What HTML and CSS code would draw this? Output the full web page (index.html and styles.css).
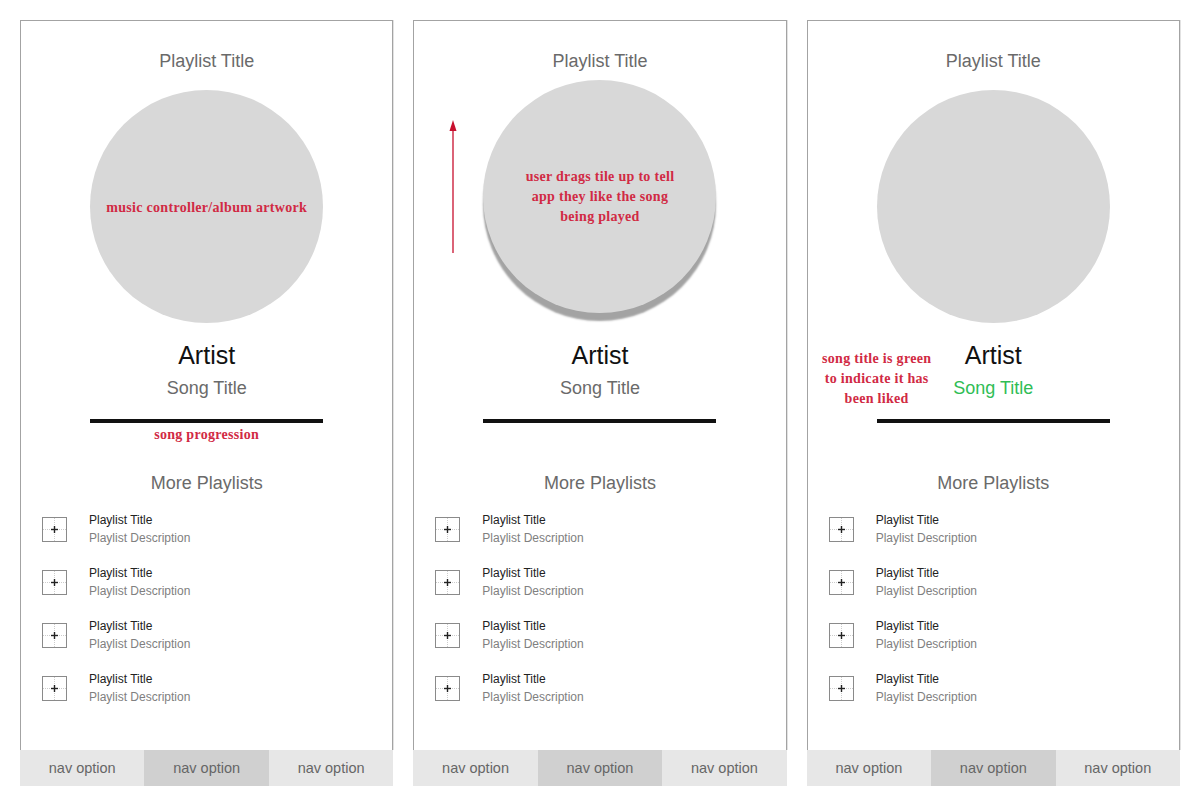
FILE: index.html
```html
<!DOCTYPE html>
<html>
<head>
<meta charset="utf-8">
<link rel="stylesheet" href="styles.css">
</head>
<body>
<div class="board">
  <section class="phone">
    <div class="screen">
      <div class="ptitle">Playlist Title</div>
      <div class="art"><span class="note">music controller/album artwork</span></div>
      <div class="artist">Artist</div>
      <div class="song">Song Title</div>
      <div class="bar"></div>
      <div class="annrow note">song progression</div>
      <div class="more">More Playlists</div>
      <ul class="list">
        <li class="item"><span class="add"><svg width="25" height="25" viewBox="0 0 25 25"><rect x="0.5" y="0.5" width="24" height="24" fill="#fff" stroke="#8a8a8a"/><line x1="1" y1="12.5" x2="24" y2="12.5" stroke="#ccc" stroke-dasharray="1 1"/><line x1="12.5" y1="1" x2="12.5" y2="24" stroke="#ccc" stroke-dasharray="1 1"/><line x1="9" y1="12.5" x2="16" y2="12.5" stroke="#222" stroke-width="1.4"/><line x1="12.5" y1="9" x2="12.5" y2="16" stroke="#222" stroke-width="1.4"/></svg></span><span class="txt"><span class="it">Playlist Title</span><span class="id">Playlist Description</span></span></li>
        <li class="item"><span class="add"><svg width="25" height="25" viewBox="0 0 25 25"><rect x="0.5" y="0.5" width="24" height="24" fill="#fff" stroke="#8a8a8a"/><line x1="1" y1="12.5" x2="24" y2="12.5" stroke="#ccc" stroke-dasharray="1 1"/><line x1="12.5" y1="1" x2="12.5" y2="24" stroke="#ccc" stroke-dasharray="1 1"/><line x1="9" y1="12.5" x2="16" y2="12.5" stroke="#222" stroke-width="1.4"/><line x1="12.5" y1="9" x2="12.5" y2="16" stroke="#222" stroke-width="1.4"/></svg></span><span class="txt"><span class="it">Playlist Title</span><span class="id">Playlist Description</span></span></li>
        <li class="item"><span class="add"><svg width="25" height="25" viewBox="0 0 25 25"><rect x="0.5" y="0.5" width="24" height="24" fill="#fff" stroke="#8a8a8a"/><line x1="1" y1="12.5" x2="24" y2="12.5" stroke="#ccc" stroke-dasharray="1 1"/><line x1="12.5" y1="1" x2="12.5" y2="24" stroke="#ccc" stroke-dasharray="1 1"/><line x1="9" y1="12.5" x2="16" y2="12.5" stroke="#222" stroke-width="1.4"/><line x1="12.5" y1="9" x2="12.5" y2="16" stroke="#222" stroke-width="1.4"/></svg></span><span class="txt"><span class="it">Playlist Title</span><span class="id">Playlist Description</span></span></li>
        <li class="item"><span class="add"><svg width="25" height="25" viewBox="0 0 25 25"><rect x="0.5" y="0.5" width="24" height="24" fill="#fff" stroke="#8a8a8a"/><line x1="1" y1="12.5" x2="24" y2="12.5" stroke="#ccc" stroke-dasharray="1 1"/><line x1="12.5" y1="1" x2="12.5" y2="24" stroke="#ccc" stroke-dasharray="1 1"/><line x1="9" y1="12.5" x2="16" y2="12.5" stroke="#222" stroke-width="1.4"/><line x1="12.5" y1="9" x2="12.5" y2="16" stroke="#222" stroke-width="1.4"/></svg></span><span class="txt"><span class="it">Playlist Title</span><span class="id">Playlist Description</span></span></li>
      </ul>
    </div>
    <nav class="nav"><span class="opt">nav option</span><span class="opt active">nav option</span><span class="opt">nav option</span></nav>
  </section>

  <section class="phone">
    <div class="screen">
      <svg class="arrow" width="14" height="134" viewBox="0 0 14 134"><line x1="7" y1="8" x2="7" y2="133" stroke="#c8102e" stroke-width="1.3"/><polygon points="7,0 3.5,11 10.5,11" fill="#c8102e"/></svg>
      <div class="ptitle">Playlist Title</div>
      <div class="art lifted"><span class="note">user drags tile up to tell<br>app they like the song<br>being played</span></div>
      <div class="artist">Artist</div>
      <div class="song">Song Title</div>
      <div class="bar"></div>
      <div class="annrow"></div>
      <div class="more">More Playlists</div>
      <ul class="list">
        <li class="item"><span class="add"><svg width="25" height="25" viewBox="0 0 25 25"><rect x="0.5" y="0.5" width="24" height="24" fill="#fff" stroke="#8a8a8a"/><line x1="1" y1="12.5" x2="24" y2="12.5" stroke="#ccc" stroke-dasharray="1 1"/><line x1="12.5" y1="1" x2="12.5" y2="24" stroke="#ccc" stroke-dasharray="1 1"/><line x1="9" y1="12.5" x2="16" y2="12.5" stroke="#222" stroke-width="1.4"/><line x1="12.5" y1="9" x2="12.5" y2="16" stroke="#222" stroke-width="1.4"/></svg></span><span class="txt"><span class="it">Playlist Title</span><span class="id">Playlist Description</span></span></li>
        <li class="item"><span class="add"><svg width="25" height="25" viewBox="0 0 25 25"><rect x="0.5" y="0.5" width="24" height="24" fill="#fff" stroke="#8a8a8a"/><line x1="1" y1="12.5" x2="24" y2="12.5" stroke="#ccc" stroke-dasharray="1 1"/><line x1="12.5" y1="1" x2="12.5" y2="24" stroke="#ccc" stroke-dasharray="1 1"/><line x1="9" y1="12.5" x2="16" y2="12.5" stroke="#222" stroke-width="1.4"/><line x1="12.5" y1="9" x2="12.5" y2="16" stroke="#222" stroke-width="1.4"/></svg></span><span class="txt"><span class="it">Playlist Title</span><span class="id">Playlist Description</span></span></li>
        <li class="item"><span class="add"><svg width="25" height="25" viewBox="0 0 25 25"><rect x="0.5" y="0.5" width="24" height="24" fill="#fff" stroke="#8a8a8a"/><line x1="1" y1="12.5" x2="24" y2="12.5" stroke="#ccc" stroke-dasharray="1 1"/><line x1="12.5" y1="1" x2="12.5" y2="24" stroke="#ccc" stroke-dasharray="1 1"/><line x1="9" y1="12.5" x2="16" y2="12.5" stroke="#222" stroke-width="1.4"/><line x1="12.5" y1="9" x2="12.5" y2="16" stroke="#222" stroke-width="1.4"/></svg></span><span class="txt"><span class="it">Playlist Title</span><span class="id">Playlist Description</span></span></li>
        <li class="item"><span class="add"><svg width="25" height="25" viewBox="0 0 25 25"><rect x="0.5" y="0.5" width="24" height="24" fill="#fff" stroke="#8a8a8a"/><line x1="1" y1="12.5" x2="24" y2="12.5" stroke="#ccc" stroke-dasharray="1 1"/><line x1="12.5" y1="1" x2="12.5" y2="24" stroke="#ccc" stroke-dasharray="1 1"/><line x1="9" y1="12.5" x2="16" y2="12.5" stroke="#222" stroke-width="1.4"/><line x1="12.5" y1="9" x2="12.5" y2="16" stroke="#222" stroke-width="1.4"/></svg></span><span class="txt"><span class="it">Playlist Title</span><span class="id">Playlist Description</span></span></li>
      </ul>
    </div>
    <nav class="nav"><span class="opt">nav option</span><span class="opt active">nav option</span><span class="opt">nav option</span></nav>
  </section>

  <section class="phone">
    <div class="screen">
      <div class="side-note note">song title is green<br>to indicate it has<br>been liked</div>
      <div class="ptitle">Playlist Title</div>
      <div class="art"></div>
      <div class="artist">Artist</div>
      <div class="song liked">Song Title</div>
      <div class="bar"></div>
      <div class="annrow"></div>
      <div class="more">More Playlists</div>
      <ul class="list">
        <li class="item"><span class="add"><svg width="25" height="25" viewBox="0 0 25 25"><rect x="0.5" y="0.5" width="24" height="24" fill="#fff" stroke="#8a8a8a"/><line x1="1" y1="12.5" x2="24" y2="12.5" stroke="#ccc" stroke-dasharray="1 1"/><line x1="12.5" y1="1" x2="12.5" y2="24" stroke="#ccc" stroke-dasharray="1 1"/><line x1="9" y1="12.5" x2="16" y2="12.5" stroke="#222" stroke-width="1.4"/><line x1="12.5" y1="9" x2="12.5" y2="16" stroke="#222" stroke-width="1.4"/></svg></span><span class="txt"><span class="it">Playlist Title</span><span class="id">Playlist Description</span></span></li>
        <li class="item"><span class="add"><svg width="25" height="25" viewBox="0 0 25 25"><rect x="0.5" y="0.5" width="24" height="24" fill="#fff" stroke="#8a8a8a"/><line x1="1" y1="12.5" x2="24" y2="12.5" stroke="#ccc" stroke-dasharray="1 1"/><line x1="12.5" y1="1" x2="12.5" y2="24" stroke="#ccc" stroke-dasharray="1 1"/><line x1="9" y1="12.5" x2="16" y2="12.5" stroke="#222" stroke-width="1.4"/><line x1="12.5" y1="9" x2="12.5" y2="16" stroke="#222" stroke-width="1.4"/></svg></span><span class="txt"><span class="it">Playlist Title</span><span class="id">Playlist Description</span></span></li>
        <li class="item"><span class="add"><svg width="25" height="25" viewBox="0 0 25 25"><rect x="0.5" y="0.5" width="24" height="24" fill="#fff" stroke="#8a8a8a"/><line x1="1" y1="12.5" x2="24" y2="12.5" stroke="#ccc" stroke-dasharray="1 1"/><line x1="12.5" y1="1" x2="12.5" y2="24" stroke="#ccc" stroke-dasharray="1 1"/><line x1="9" y1="12.5" x2="16" y2="12.5" stroke="#222" stroke-width="1.4"/><line x1="12.5" y1="9" x2="12.5" y2="16" stroke="#222" stroke-width="1.4"/></svg></span><span class="txt"><span class="it">Playlist Title</span><span class="id">Playlist Description</span></span></li>
        <li class="item"><span class="add"><svg width="25" height="25" viewBox="0 0 25 25"><rect x="0.5" y="0.5" width="24" height="24" fill="#fff" stroke="#8a8a8a"/><line x1="1" y1="12.5" x2="24" y2="12.5" stroke="#ccc" stroke-dasharray="1 1"/><line x1="12.5" y1="1" x2="12.5" y2="24" stroke="#ccc" stroke-dasharray="1 1"/><line x1="9" y1="12.5" x2="16" y2="12.5" stroke="#222" stroke-width="1.4"/><line x1="12.5" y1="9" x2="12.5" y2="16" stroke="#222" stroke-width="1.4"/></svg></span><span class="txt"><span class="it">Playlist Title</span><span class="id">Playlist Description</span></span></li>
      </ul>
    </div>
    <nav class="nav"><span class="opt">nav option</span><span class="opt active">nav option</span><span class="opt">nav option</span></nav>
  </section>
</div>
</body>
</html>
```

FILE: styles.css
```css
html, body {
  margin: 0;
  padding: 0;
  background: #fff;
}
body {
  font-family: "Liberation Sans", Arial, sans-serif;
  color: #666;
}
.board {
  display: flex;
  gap: 20px;
  padding: 20px;
  height: 766px;
}
.phone {
  flex: 1;
  display: flex;
  flex-direction: column;
  min-width: 0;
}
.screen {
  flex: 1;
  position: relative;
  display: flex;
  flex-direction: column;
  align-items: center;
  padding-top: 28px;
  border: 1px solid #a3a3a3;
  border-bottom: none;
  box-shadow: 1px 0 0 #e2e2e2;
}
.ptitle {
  font-size: 18px;
  line-height: 24px;
  color: #6a6a6a;
}
.art {
  margin-top: 17px;
  width: 233px;
  height: 233px;
  border-radius: 50%;
  background: #d8d8d8;
  display: flex;
  align-items: center;
  justify-content: center;
  text-align: center;
  flex-shrink: 0;
}
.art .note {
  padding-top: 3px;
}
.art.lifted {
  transform: translateY(-10px);
  box-shadow: 0 8px 2px #a3a3a3;
}
.art.lifted .note {
  padding-top: 0;
}
.note {
  font-family: "Liberation Serif", "Times New Roman", serif;
  font-weight: bold;
  font-size: 14px;
  letter-spacing: 0.3px;
  line-height: 20px;
  color: #d12a44;
}
.artist {
  margin-top: 17px;
  font-size: 25px;
  line-height: 30px;
  color: #111;
}
.song {
  margin-top: 6px;
  font-size: 18px;
  line-height: 24px;
  color: #6a6a6a;
}
.song.liked {
  color: #2fbd55;
}
.bar {
  margin-top: 19px;
  width: 233px;
  height: 4px;
  background: #111;
}
.annrow {
  margin-top: 4px;
  height: 16px;
  line-height: 16px;
}
.more {
  margin-top: 28px;
  font-size: 18px;
  line-height: 24px;
  color: #6a6a6a;
}
.list {
  list-style: none;
  margin: 16px 0 0;
  padding: 0 0 0 21px;
  align-self: stretch;
  display: flex;
  flex-direction: column;
  gap: 17px;
}
.item {
  display: flex;
  align-items: center;
  gap: 22px;
  height: 36px;
}
.add {
  display: flex;
  width: 25px;
  height: 25px;
  margin-top: 1px;
}
.txt {
  display: flex;
  flex-direction: column;
}
.it {
  font-size: 12px;
  line-height: 18px;
  color: #222;
}
.id {
  font-size: 12px;
  line-height: 18px;
  color: #808080;
}
.nav {
  display: flex;
  height: 36px;
  background: #e7e7e7;
}
.opt {
  flex: 1;
  display: flex;
  align-items: center;
  justify-content: center;
  font-size: 14.5px;
  color: #666;
}
.opt.active {
  background: #d0d0d0;
}
.arrow {
  position: absolute;
  left: 32px;
  top: 99px;
}
.side-note {
  position: absolute;
  left: 4px;
  top: 328px;
  width: 130px;
  text-align: center;
}
```
